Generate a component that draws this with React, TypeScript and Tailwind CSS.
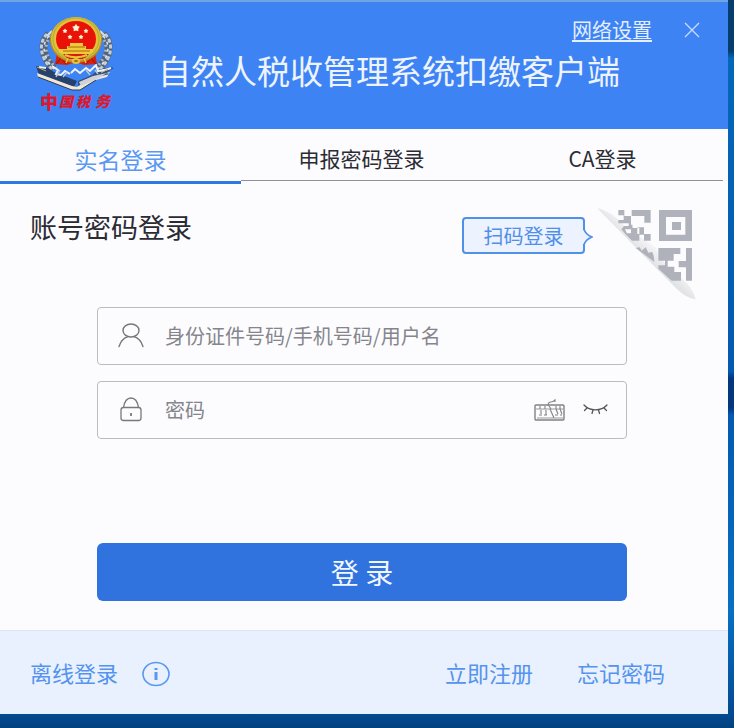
import React, { useState } from 'react';
import clsx from 'clsx';

const tabs = [
  { id: 'realname', label: '实名登录' },
  { id: 'report', label: '申报密码登录' },
  { id: 'ca', label: 'CA登录' },
];

const stars = [
  { x: 76, y: 28, r: 4 },
  { x: 65, y: 31, r: 2.5 },
  { x: 86, y: 31, r: 2.5 },
  { x: 70, y: 37, r: 2.5 },
  { x: 81, y: 37, r: 2.5 },
];

const starPoints = (cx: number, cy: number, r: number) =>
  Array.from({ length: 10 }, (_, i) => {
    const radius = i % 2 ? r * 0.6 : r;
    const angle = (Math.PI / 5) * i - Math.PI / 2;
    return `${cx + radius * Math.cos(angle)},${cy + radius * Math.sin(angle)}`;
  }).join(' ');

const Emblem = () => (
  <svg viewBox="30 10 95 105" className="h-[105px] w-[95px] shrink-0" role="img" aria-label="中国税务">
    {/* wreath */}
    <g fill="none">
      <path d="M49 34C40 43 42 57 54 69M103 34c9 9 7 23-5 35" stroke="#4e6484" strokeWidth="8" />
      <path d="M47 34C38 43 40 58 52 69M105 34c9 9 7 24-5 35" stroke="#c3ccd3" strokeWidth="3" strokeDasharray="4 2" />
      <path d="M51 36C43 44 45 57 56 68M101 36c8 8 6 21-5 32" stroke="#aeb4b0" strokeWidth="3" strokeDasharray="2 3" />
      <path d="M49 36C41 44 43 58 54 69M103 36c8 8 6 22-5 33" stroke="#e5e7e2" strokeWidth="1.5" strokeDasharray="3 4" />
      <path d="M52 31l-5 5M100 31l5 5" stroke="#d9dfe4" strokeWidth="2" />
    </g>
    {/* open book */}
    <path d="M36 66l10 1 8 5 23 9-3 6-35-12z" fill="#25416c" />
    <path d="M37 73l35 13 5 1 14-9 19-6-3 5-11 3-16 10h-8L38 77z" fill="#efe8d9" />
    <path d="M38 77l34 13h8l16-10" fill="none" stroke="#34394a" strokeWidth="1" />
    <path d="M78 81l14-6 6-5 12-3 4 1-8 5 4 1-17 4-15 8z" fill="#31507d" />
    <path d="M79 82l14-6 14-3-8 5-18 8z" fill="#cfd3d6" />
    <path d="M52 66l6 4-2 4 5 1 4-4 5 3M71 73l4-4 5 4 6-5 4 3 6-6 2 6 6-1M102 71l9-3M39 67l7 1" fill="none" stroke="#eef2f5" strokeWidth="2" />
    <path d="M60 70l-4 7M67 72l-4 5M86 70l4 5M95 70l3 4" stroke="#b7c7da" strokeWidth="1.5" />
    <path d="M37 67l9 4M108 69l-7 4" stroke="#c9ab63" strokeWidth="1" />
    {/* ribbon and gear */}
    <path d="M57 53l38 0 2 11-13 1-8-3-9 3-12-1z" fill="#d81f12" />
    <path d="M56 64l5-6 5 6M96 64l-5-6-5 6" fill="none" stroke="#8f150f" strokeWidth="1" />
    <ellipse cx="76" cy="40" rx="26" ry="23" fill="#b98d1d" />
    <ellipse cx="76" cy="39" rx="25" ry="22" fill="#e6c136" />
    <ellipse cx="76" cy="39" rx="23" ry="21" fill="none" stroke="#b5b53e" strokeWidth="1.5" />
    <ellipse cx="76" cy="39" rx="20" ry="18" fill="#e81208" />
    <path d="M70 46v-3h13v3h3v3h7v3l-3 2H62l-3-2v-3h8v-3z" fill="#f0ca39" />
    <path d="M68 47h17M63 51h27" stroke="#a56a12" strokeWidth="1" />
    <path d="M63 54h26l-5 5H68z" fill="#d71a10" />
    <path d="M65 55c7 3 15 3 22 0" fill="none" stroke="#e9c43a" strokeWidth="2" />
    <ellipse cx="76" cy="61" rx="4" ry="3" fill="#e9c43a" />
    <ellipse cx="76" cy="61" rx="2" ry="1" fill="#a9640c" />
    <path d="M68 58l-2 5M84 58l2 5" stroke="#e8c53c" strokeWidth="1.5" />
    {stars.map((s) => (
      <polygon key={`${s.x}-${s.y}`} points={starPoints(s.x, s.y, s.r)} fill="#fff2cf" />
    ))}
    <g fill="#df1729" fontFamily="'Noto Sans CJK SC', sans-serif" fontWeight="900">
      <text x="40" y="109" fontSize="18">中</text>
      <text x="59" y="107" fontSize="14" fontStyle="italic">国</text>
      <text x="76" y="107" fontSize="14" fontStyle="italic">税</text>
      <text x="95" y="107" fontSize="15" fontStyle="italic">务</text>
    </g>
  </svg>
);

const UserIcon = () => (
  <svg viewBox="0 0 28 28" className="h-7 w-7 shrink-0" fill="none" stroke="#77787e" strokeWidth="1.4" strokeLinecap="round">
    <ellipse cx="14" cy="8.5" rx="8" ry="6.5" />
    <path d="M2 24.500C3.500 20 6.500 16 11 14.700M26 24.500C24.500 20 21.500 16 17 14.700" />
  </svg>
);

const LockIcon = () => (
  <svg viewBox="0 0 28 28" className="h-7 w-7 shrink-0" fill="none" stroke="#77787e" strokeWidth="1.3">
    <rect x="4" y="11.500" width="20" height="13" rx="2.500" />
    <path d="M6.500 11.500C7.500 5 10 2 14 2s6.500 3 7.500 9.500" />
    <path d="M14 17v3" strokeWidth="1.800" />
  </svg>
);

const KeyboardIcon = () => (
  <svg viewBox="0 0 32 24" className="h-6 w-8" fill="none" stroke="#808186" strokeWidth="1.1">
    <rect x="2" y="7" width="29" height="15" rx="1" strokeWidth="1.400" />
    <path d="M15 8c0-4 2-4 3-4 2 0 3-1 4-2v2" />
    <path d="M3 11h27M4 20h26" strokeWidth="0.8" />
    <path d="M7 8v3M12 8v3M16 8l2 3M23 8v3M27 8v3M8 12v4M13 12v5M17 11l4 9M23 11l2 5M27 11l2 5M6 17h3M11 17h3M22 17h3M27 17h2" />
  </svg>
);

const ClosedEyeIcon = () => (
  <svg viewBox="0 0 28 14" className="h-[14px] w-7" fill="none" stroke="#55565c" strokeWidth="1.3" strokeLinecap="round">
    <path d="M3 2c6 6.500 17 6.500 23 0" />
    <path d="M6 5L3.500 7.500M12 7l-1 3.500M17.500 7l1 3.500M23 5l2.500 2.500" />
  </svg>
);

const QrCorner = () => (
  <svg viewBox="6 9 300 300" className="h-[100px] w-[100px]" aria-hidden="true">
    <defs>
      <linearGradient id="fold" gradientUnits="userSpaceOnUse" x1="130" y1="150" x2="165" y2="112">
        <stop offset="0" stopColor="#e2e3e6" />
        <stop offset="1" stopColor="#fbfbfd" />
      </linearGradient>
    </defs>
    <path d="M6 24C40 34 68 50 92 82l90 60c12 30 40 70 70 88 26 18 44 40 50 68C282 296 262 284 240 262z" fill="url(#fold)" />
    <g fill="#afb2bb">
      <path d="M70 30h18v18h20v26h5v10h20v18h14v-20h-20v20h40v20h-20v-18h-14v18h-22l-20-20-12-14 8-10h14V70H70V60h16V46H70z" />
      <path d="M110 30h57v38h-19V48h-38z" />
      <path d="M192 30h99v93h-99zM213 51v53h58V51z" fillRule="evenodd" />
      <path d="M231 66h27v24h-27z" />
      <path d="M190 144h66v18h-20v20h-18v18h20v16h20v26h-28l-40-36v-10h20v-14h-20z" />
      <path d="M273 144h18v98h-18v-40h-22v-19h22z" />
      <path d="M122 144l12-2 6 10 12-10 8 16 12-2 4 12 2 18z" />
    </g>
    <path d="M90 88h18v12H96zM108 52h38v18h-16v12h-17V68h-5z" fill="#fcfcfe" />
  </svg>
);

const App = () => {
  const [tab, setTab] = useState('realname');

  return (
    <div className="flex min-h-screen flex-col bg-[linear-gradient(#063d6c_0%,#063d6c_7%,#0467b8_8%,#0459b0_51%,#03367c_52%,#03367c_56%,#0459b0_57%,#0670c4_84%,#034a92_98%,#02417e_100%)] pr-[6px] pb-[14px] font-['Noto_Sans_CJK_SC','Noto_Sans',sans-serif]">
      <div className="flex flex-1 flex-col bg-[#fcfcfe]">
        <header className="flex h-[129px] border-t-2 border-[#6fa3e4] bg-[#3e83f4] pt-2 pl-[30px]">
          <Emblem />
          <div className="flex flex-1 flex-col pl-[33px]">
            <div className="flex h-10 items-center justify-end gap-8 pr-7">
              <a href="#network" className="text-[20px] leading-6 text-[#e4efff] underline decoration-2 underline-offset-2">
                网络设置
              </a>
              <button type="button" aria-label="关闭">
                <svg viewBox="0 0 16 16" className="h-4 w-4" stroke="#c9dcfb" strokeWidth="1.3">
                  <path d="M1 1l14 14M15 1L1 15" />
                </svg>
              </button>
            </div>
            <h1 className="text-[33px] leading-10 whitespace-nowrap text-[#edf4ff]">自然人税收管理系统扣缴客户端</h1>
          </div>
        </header>

        <nav className="flex h-[55px] pr-[5px]" role="tablist">
          {tabs.map((t) => (
            <button
              key={t.id}
              type="button"
              role="tab"
              aria-selected={tab === t.id}
              onClick={() => setTab(t.id)}
              className={clsx(
                'flex-1',
                tab === t.id
                  ? 'h-[55px] border-b-3 border-[#2f78e2] pt-2 text-[23px] text-[#5a98f2]'
                  : 'h-[52px] border-b border-[#8e9096] pt-2 text-[21px] text-[#2b2b33]'
              )}
            >
              {t.label}
            </button>
          ))}
        </nav>

        <main className="flex-1 pb-[29px]">
          <div className="flex items-start pt-[19px] pr-[31px] pl-[30px]">
            <h2 className="mt-1 flex-1 text-[27px] leading-10 text-[#2b2b33]">账号密码登录</h2>
            <button
              type="button"
              className="relative mt-[14px] mr-[12px] h-[37px] w-[123px] rounded-[4px] border-2 border-[#4f90e8] bg-[#ecf2fe] text-[20px] leading-8 text-[#4f8fec]"
            >
              扫码登录
              <svg viewBox="0 0 10 16" className="absolute top-[10px] -right-[10px] h-4 w-[10px]">
                <path d="M0 1c2 0 2 4 8 7-6 3-6 7-8 7z" fill="#ecf2fe" />
                <path d="M1 0c1 4 3 6 8 8-5 2-7 4-8 8" fill="none" stroke="#4f90e8" strokeWidth="1.600" />
              </svg>
            </button>
            <QrCorner />
          </div>

          <form className="pt-1 pr-[101px] pl-[97px]" onSubmit={(e) => e.preventDefault()}>
            <div className="flex h-[58px] items-center rounded-[4px] border border-[#babbc3] px-[19px]">
              <label htmlFor="account" aria-label="账号">
                <UserIcon />
              </label>
              <input
                id="account"
                type="text"
                placeholder="身份证件号码/手机号码/用户名"
                className="ml-5 min-w-0 flex-1 bg-transparent text-[20px] text-[#55565c] outline-none placeholder:text-[#85868c]"
              />
            </div>
            <div className="mt-4 flex h-[58px] items-center rounded-[4px] border border-[#babbc3] pr-[17px] pl-[19px]">
              <label htmlFor="password" aria-label="密码">
                <LockIcon />
              </label>
              <input
                id="password"
                type="password"
                placeholder="密码"
                className="ml-5 min-w-0 flex-1 bg-transparent text-[20px] text-[#55565c] outline-none placeholder:text-[#85868c]"
              />
              <button type="button" aria-label="软键盘" className="mr-4">
                <KeyboardIcon />
              </button>
              <button type="button" aria-label="显示密码">
                <ClosedEyeIcon />
              </button>
            </div>
            <button type="submit" className="mt-[104px] h-[58px] w-full rounded-[6px] bg-[#3073df] text-[28px] text-[#f2f7ff]">
              登 录
            </button>
          </form>
        </main>

        <footer className="flex h-[84px] items-center border-t border-[#dce6f4] bg-[#e8f1fd] pr-[63px] pl-[30px] text-[22px] text-[#5593ee]">
          <a href="#offline">离线登录</a>
          <button type="button" aria-label="说明" className="ml-6">
            <svg viewBox="0 0 28 28" className="h-7 w-7" fill="none" stroke="#5a98ee">
              <ellipse cx="14" cy="15" rx="13" ry="11.500" strokeWidth="1.600" />
              <path d="M14 13v8M14 9v2" strokeWidth="3" />
            </svg>
          </button>
          <a href="#register" className="ml-auto">
            立即注册
          </a>
          <a href="#forgot" className="ml-11">
            忘记密码
          </a>
        </footer>
      </div>
    </div>
  );
};

export default App;
